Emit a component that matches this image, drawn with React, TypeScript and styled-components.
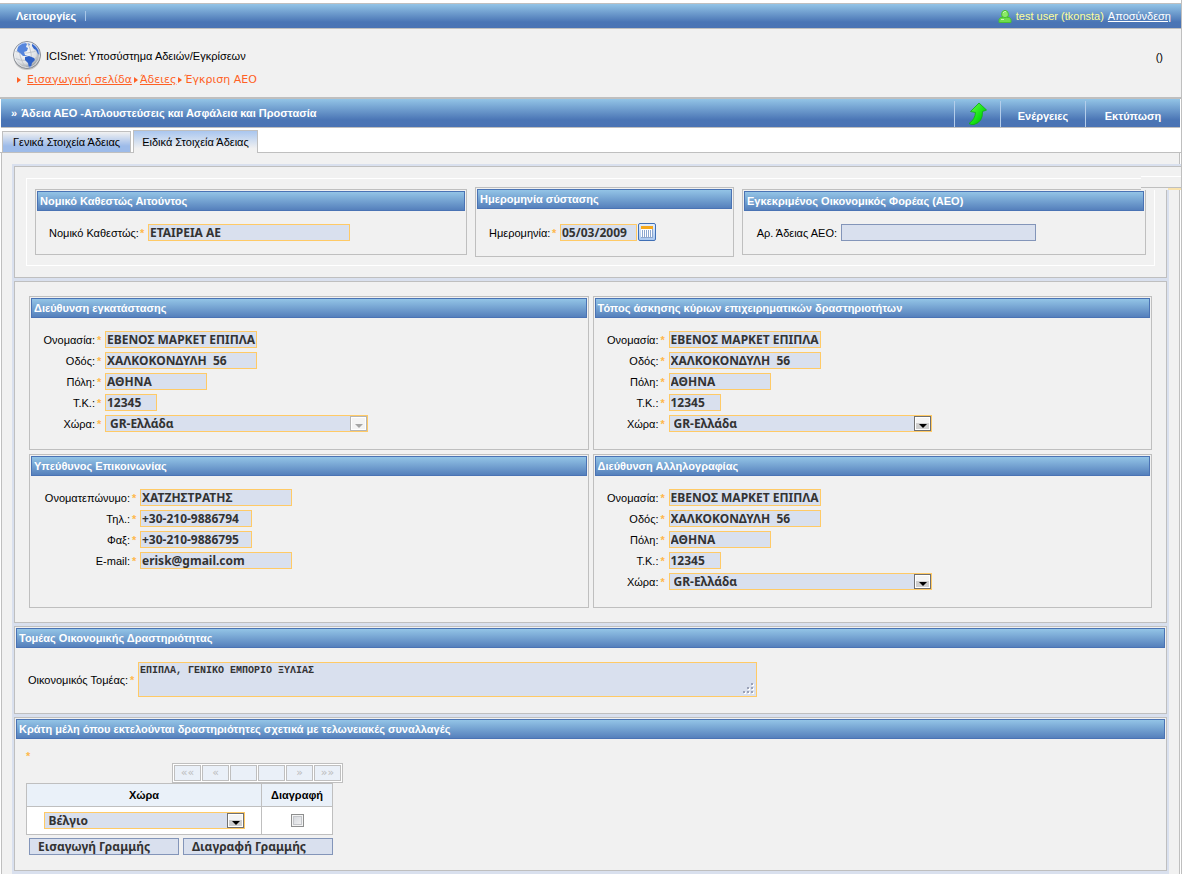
import React, { useId } from 'react';
import styled, { createGlobalStyle, css } from 'styled-components';

const uiFont = '"Liberation Sans", Arial, sans-serif';
const fieldFont = '"Noto Sans", "Liberation Sans", sans-serif';
const grey = '#bfbfbf';
const paper = '#f1f1f1';
const pale = '#d9e0ee';
const amber = '#ffca66';
const deepBlue = '#4a73b4';
const barGradient = 'linear-gradient(#93c4e6, #4a75b5 75%, #4a73b4)';

const GlobalStyle = createGlobalStyle`
  *, *::before, *::after { box-sizing: border-box; }
  body {
    margin: 0;
    background: #fff;
    color: #000;
    font: 11px/14px ${uiFont};
  }
  input, select, textarea, button { margin: 0; border-radius: 0; }
`;

const Page = styled.div`
  display: flex;
  flex-direction: column;
  min-height: 100vh;
  margin-right: 1px;
  padding-top: 3px;
  border-right: 1px solid ${grey};
`;

const TopBar = styled.nav`
  display: flex;
  align-items: center;
  justify-content: space-between;
  height: 26px;
  padding: 0 10px 0 16px;
  border: solid ${grey};
  border-width: 1px 0;
  background: ${barGradient};
  color: #fff;
`;

const MenuButton = styled.button`
  padding: 0 9px 0 0;
  border: 0;
  border-right: 1px solid #a9c6e6;
  background: none;
  color: #fff;
  font: bold 11px/10px ${uiFont};
`;

const UserInfo = styled.div`
  display: flex;
  align-items: center;
  gap: 4px;
  color: #ffff99;
`;

const LogoutLink = styled.a`
  color: #fff;
  text-decoration: underline;
`;

const Header = styled.header`
  display: flex;
  justify-content: space-between;
  align-items: flex-start;
  height: 70px;
  padding: 10px 18px 0 12px;
  border-bottom: 2px solid ${grey};
  background: ${paper};
`;

const AppName = styled.div`
  display: flex;
  align-items: center;
  gap: 4px;
  height: 34px;
`;

const OfficeCode = styled.span`
  padding-top: 11px;
`;

const Breadcrumb = styled.nav`
  display: flex;
  align-items: center;
  gap: 2px;
  color: #ff6124;
  font: 11px/14px "DejaVu Sans", Verdana, sans-serif;
  a { color: inherit; }
`;

const CrumbMark = styled.i<{ $first?: boolean }>`
  border: solid transparent;
  border-width: 3px 0 3px 4px;
  border-left-color: #ff6124;
  margin: ${p => (p.$first ? '0 4px 0 5px' : '0')};
`;

const TitleBar = styled.div`
  display: flex;
  justify-content: space-between;
  height: 29px;
  margin: 0 1px 0 1px;
  border-bottom: 1px solid ${grey};
  background: ${barGradient};
  color: #fff;
`;

const PageTitle = styled.h1`
  display: flex;
  align-items: center;
  gap: 4px;
  margin: 0;
  padding-left: 10px;
  font: bold 11px/28px ${uiFont};
`;

const Actions = styled.div`
  display: flex;
  padding-top: 2px;
`;

const ActionButton = styled.button<{ $width: number }>`
  display: flex;
  align-items: center;
  justify-content: center;
  width: ${p => p.$width}px;
  padding: 4px 0 0;
  border: 0;
  border-left: 1px solid #b4cdea;
  background: none;
  color: #fff;
  font: bold 11px/14px ${uiFont};
`;

const IconButton = styled(ActionButton)`
  padding: 0;
`;

const Tabs = styled.div`
  display: flex;
  align-items: flex-end;
  gap: 2px;
  height: 25px;
  padding-left: 2px;
  border-bottom: 1px solid ${grey};
`;

const Tab = styled.button<{ $active?: boolean }>`
  width: ${p => (p.$active ? 125 : 129)}px;
  height: ${p => (p.$active ? 23 : 21)}px;
  margin-bottom: ${p => (p.$active ? -1 : 0)}px;
  padding: 0;
  border: 1px solid ${grey};
  border-bottom: 0;
  background: ${p => (p.$active
    ? `linear-gradient(#a9c6ef, ${paper} 80%)`
    : `linear-gradient(${paper}, #9dbbe9 70%)`)};
  font: 11px/14px ${uiFont};
  color: #000;
  white-space: nowrap;
`;

const Content = styled.main`
  position: relative;
  display: flex;
  flex: 1;
  flex-direction: column;
  margin: 0 1px;
  padding: 11px 10px 0;
  border: solid ${grey};
  border-width: 0 1px;
  background: ${paper};
`;

/* Folded corner that lies over the top right of the form frame */
const CornerFlap = styled.div`
  position: absolute;
  top: 11px;
  right: -2px;
  width: 40px;
  height: 26px;
  background:
    linear-gradient(#f9e3ae, #f9e3ae) right bottom / 13px 2px no-repeat,
    linear-gradient(
      ${pale} 2px, ${grey} 2px 3px, ${paper} 3px 12px, #fff 12px 13px,
      ${paper} 13px 23px, ${grey} 23px 24px, ${paper} 24px
    );
`;

const Frame = styled.form`
  display: flex;
  flex: 1;
  flex-direction: column;
  gap: 3px;
  padding: 2px 2px 0;
  background: ${pale};
`;

const Section = styled.section<{ $pad?: string }>`
  padding: ${p => p.$pad || '1px'};
  border: 1px solid ${grey};
  background: ${paper};
`;

const NextSection = styled(Section)`
  flex: 1;
  padding: 0;
  border-bottom: 0;
`;

const Outline = styled.div`
  display: grid;
  grid-template-columns: 432fr 259fr 404fr;
  gap: 8px;
  align-items: center;
  height: 88px;
  padding: 0 8px;
  border: 1px solid #fff;
`;

const PanelGrid = styled.div`
  display: grid;
  grid-template-columns: 1fr 1fr;
  gap: 4px;
`;

const PanelBox = styled.section`
  padding: 1px;
  border: 1px solid ${grey};
`;

const PanelTitle = styled.h2`
  height: 20px;
  margin: 0;
  padding: 0 2px;
  border: 1px solid ${deepBlue};
  background: linear-gradient(#93c4e6, #5580bc);
  color: #fff;
  font: bold 11px/18px ${uiFont};
  white-space: nowrap;
  overflow: hidden;
`;

const Fields = styled.div<{ $label: number; $pad?: string }>`
  display: grid;
  grid-template-columns: ${p => p.$label}px 1fr;
  row-gap: 4px;
  padding: ${p => p.$pad || '13px 12px 16px'};
`;

const Label = styled.label`
  align-self: center;
  text-align: right;
  white-space: nowrap;
`;

const Slot = styled.div`
  display: flex;
  align-items: center;
`;

const Star = styled.span`
  width: 10px;
  padding-left: 2px;
  color: #ffb84d;
  font: bold 11px/14px ${uiFont};
`;

const Spacer = styled.span`
  width: 4px;
`;

const fieldLook = css<{ $plain?: boolean }>`
  border: 1px solid ${p => (p.$plain ? '#8395b9' : amber)};
  background: ${pale};
  color: #333;
  font: bold 12px/15px ${fieldFont};
  outline: 0;
`;

const TextInput = styled.input<{ $width: number; $plain?: boolean }>`
  ${fieldLook}
  width: ${p => p.$width}px;
  height: 17px;
  padding: 0 0 0 1px;
`;

const SelectWrap = styled.span<{ $width: number }>`
  position: relative;
  display: inline-block;
  width: ${p => p.$width}px;
  height: 17px;
`;

const SelectBox = styled.select`
  ${fieldLook}
  display: block;
  width: 100%;
  height: 17px;
  padding: 0 20px 0 4px;
  appearance: none;
  opacity: 1;
`;

const SelectArrow = styled.span<{ $off?: boolean }>`
  position: absolute;
  top: 1px;
  right: 1px;
  width: 17px;
  height: 15px;
  border: 1px solid ${p => (p.$off ? '#b5b5b5' : '#707070')};
  background: ${p => (p.$off ? '#f4f4f4' : 'linear-gradient(#f4f4f4 45%, #cfcfcf 50%)')};
  box-shadow: inset 0 0 0 1px #fff;
  pointer-events: none;
  &::after {
    content: '';
    position: absolute;
    left: 4px;
    top: 7px;
    border: solid transparent;
    border-width: 4px 4px 0;
    border-top-color: ${p => (p.$off ? '#a5a5a5' : '#000')};
  }
`;

const CalendarButton = styled.button`
  display: flex;
  align-items: center;
  justify-content: center;
  width: 18px;
  height: 18px;
  margin: -1px 0 0 1px;
  padding: 0;
  border: 1px solid #3f6fb5;
  border-radius: 2px;
  background: linear-gradient(#e4eefb, #a9c8f0);
`;

const AreaWrap = styled.span`
  position: relative;
  display: block;
  width: 619px;
  max-width: 100%;
  svg { position: absolute; right: 3px; bottom: 3px; }
`;

const TextArea = styled.textarea`
  display: block;
  width: 100%;
  height: 35px;
  padding: 1px;
  border: 1px solid ${amber};
  outline: 0;
  background: ${pale};
  color: #333;
  font: bold 10px/14px "Liberation Mono", "Courier New", monospace;
  resize: none;
`;

const Members = styled.div`
  padding: 10px 10px 14px;
`;

const MembersStar = styled.div`
  height: 14px;
  color: #ffb84d;
  font: bold 11px/14px ${uiFont};
`;

const Pager = styled.div`
  display: flex;
  gap: 1px;
  width: 171px;
  margin-left: 146px;
  padding: 1px;
  border: 1px solid ${grey};
  background: #fff;
`;

const PagerButton = styled.button`
  width: 27px;
  height: 16px;
  padding: 0;
  border: 1px solid ${grey};
  background: #eaf0f8;
  color: #bcbcbc;
  font: 11px/14px "DejaVu Sans", Verdana, sans-serif;
`;

const Table = styled.table`
  width: 307px;
  border-collapse: collapse;
  background: #fff;
  th, td {
    padding: 0;
    border: 1px solid ${grey};
    text-align: center;
    vertical-align: middle;
  }
  th {
    height: 23px;
    background: #eaf1f9;
    font: bold 11px/14px ${uiFont};
  }
  td { height: 28px; }
  th:last-child { width: 71px; }
`;

const CellInner = styled.div`
  display: flex;
  align-items: center;
  justify-content: center;
`;

const Check = styled.input`
  appearance: none;
  width: 13px;
  height: 13px;
  border: 1px solid #8e8f8f;
  background: linear-gradient(135deg, #cfd2d8, #f6f6f6);
  box-shadow: inset 0 0 0 1px #f4f4f4, inset 0 0 0 2px #c4c6ca;
`;

const RowActions = styled.div`
  display: flex;
  gap: 4px;
  padding: 3px 0 0 3px;
`;

const RowButton = styled.button`
  width: 150px;
  height: 17px;
  padding: 0 8px;
  border: 1px solid #8395b9;
  background: ${pale};
  color: #333;
  font: bold 12px/15px ${fieldFont};
  text-align: left;
`;

const GlobeIcon = () => (
  <svg width="30" height="32" viewBox="0 0 30 32" aria-hidden="true">
    <defs>
      <radialGradient id="globe" cx="0.4" cy="0.35" r="0.65">
        <stop offset="0" stopColor="#fff" />
        <stop offset="0.7" stopColor="#dcdfe3" />
        <stop offset="1" stopColor="#8d9298" />
      </radialGradient>
      <clipPath id="ball"><circle cx="15" cy="15" r="13" /></clipPath>
    </defs>
    <ellipse cx="15" cy="18" rx="13" ry="12" fill="#9a9a9a" opacity="0.5" />
    <circle cx="15" cy="15" r="13.5" fill="url(#globe)" stroke="#8a8f97" />
    <g clipPath="url(#ball)">
      <g fill="none" stroke="#b9bec5" strokeWidth="0.8">
        <path d="M2 11Q15 16 28 9M2 18Q15 24 28 16M7 3Q6 17 14 28M15 2Q22 14 18 28M22 4Q29 15 23 26" />
      </g>
      <path d="M6 6L9 3L13 2L15 4L14 7L16 8L15 11L12 12L13 15L16 16L11 16L8 13L5 11Z" fill="#5585dd" />
      <path d="M13 17L17 16L22 18L23 20L20 23L19 27L17 28L16 23L13 20Z" fill="#2f62c8" />
      <path d="M20 3L24 6L27 10L28 15L26 14L24 10L22 9L20 6Z" fill="#3467cc" />
      <path d="M16 3L18 4L17 6Z" fill="#5585dd" />
    </g>
    <circle cx="15" cy="15" r="12.5" fill="none" stroke="#fff" strokeOpacity="0.6" />
  </svg>
);

const UserIcon = () => (
  <svg width="14" height="15" viewBox="0 0 14 15" aria-hidden="true">
    <path d="M1 13.5V10.500L2.500 8.500H11.500L13 10.500V13.500Z" fill="#6fdd4e" stroke="#49c032" />
    <path d="M4 7.500Q3 5 4.500 2.500Q7 0 9.500 2.500Q11 5 10 7.500Q7 10 4 7.500Z" fill="#8bea68" stroke="#49c032" />
    <path d="M5 4Q6 2 8 2.500M3 10.500H6" fill="none" stroke="#c9f8b5" />
  </svg>
);

const ArrowIcon = () => (
  <svg width="19" height="24" viewBox="0 0 19 24" aria-hidden="true">
    <defs>
      <linearGradient id="leaf" x1="0" y1="0" x2="1" y2="1">
        <stop offset="0" stopColor="#6dff4a" />
        <stop offset="0.6" stopColor="#12e012" />
        <stop offset="1" stopColor="#0aa80a" />
      </linearGradient>
    </defs>
    <path d="M1 21.500Q7 17.500 7.500 10.500L2.500 9.500L11 1L18.500 8L14.500 9.500Q15 20 6 22.500Q3 23 1 21.500Z" fill="url(#leaf)" stroke="#0bb00b" strokeWidth="0.8" />
  </svg>
);

const CalendarIcon = () => (
  <svg width="14" height="14" viewBox="0 0 14 14" aria-hidden="true">
    <rect x="1" y="1" width="12" height="12" fill="#fff" />
    <rect x="1" y="1" width="12" height="3" fill="#f5a81c" />
    <path d="M2.500 5V12M4.500 5V12M6.500 5V12M8.500 5V12M10.500 5V12M12.500 4V13M1 12.500H13" stroke="#8ba6cf" />
  </svg>
);

const GripIcon = () => (
  <svg width="11" height="11" viewBox="0 0 11 11" aria-hidden="true">
    <g fill="#fff">
      <path d="M9 1h2v2h-2zM5 5h2v2h-2zM9 5h2v2h-2zM1 9h2v2h-2zM5 9h2v2h-2zM9 9h2v2h-2z" />
    </g>
    <g fill="#9aa2b8">
      <path d="M8 0h2v2h-2zM4 4h2v2h-2zM8 4h2v2h-2zM0 8h2v2h-2zM4 8h2v2h-2zM8 8h2v2h-2z" />
    </g>
  </svg>
);

function Panel({ title, children }: { title: string; children: React.ReactNode }) {
  return (
    <PanelBox>
      <PanelTitle>{title}</PanelTitle>
      {children}
    </PanelBox>
  );
}

type TextFieldProps = {
  label: string;
  value: string;
  width: number;
  optional?: boolean;
  children?: React.ReactNode;
};

function TextField({ label, value, width, optional, children }: TextFieldProps) {
  const id = useId();
  return (
    <>
      <Label htmlFor={id}>{label}</Label>
      <Slot>
        {optional ? <Spacer /> : <Star>*</Star>}
        <TextInput id={id} type="text" defaultValue={value} $width={width} $plain={optional} />
        {children}
      </Slot>
    </>
  );
}

type CountrySelectProps = { id?: string; name?: string; value: string; width: number; disabled?: boolean };

function CountrySelect({ id, name, value, width, disabled }: CountrySelectProps) {
  return (
    <SelectWrap $width={width}>
      <SelectBox id={id} aria-label={name} defaultValue={value} disabled={disabled}>
        <option>{value}</option>
      </SelectBox>
      <SelectArrow $off={disabled} />
    </SelectWrap>
  );
}

function AddressPanel({ title, locked }: { title: string; locked?: boolean }) {
  const id = useId();
  return (
    <Panel title={title}>
      <Fields $label={52}>
        <TextField label="Ονομασία:" value="ΕΒΕΝΟΣ ΜΑΡΚΕΤ ΕΠΙΠΛΑ" width={152} />
        <TextField label="Οδός:" value="ΧΑΛΚΟΚΟΝΔΥΛΗ  56" width={152} />
        <TextField label="Πόλη:" value="ΑΘΗΝΑ" width={102} />
        <TextField label="Τ.Κ.:" value="12345" width={52} />
        <Label htmlFor={id}>Χώρα:</Label>
        <Slot>
          <Star>*</Star>
          <CountrySelect id={id} value="GR-Ελλάδα" width={263} disabled={locked} />
        </Slot>
      </Fields>
    </Panel>
  );
}

export default function App() {
  return (
    <>
      <GlobalStyle />
      <Page>
        <TopBar>
          <MenuButton type="button">Λειτουργίες</MenuButton>
          <UserInfo>
            <UserIcon />
            <span>test user (tkonsta)</span>
            <LogoutLink href="#logout">Αποσύνδεση</LogoutLink>
          </UserInfo>
        </TopBar>

        <Header>
          <div>
            <AppName>
              <GlobeIcon />
              <span>ICISnet: Υποσύστημα Αδειών/Εγκρίσεων</span>
            </AppName>
            <Breadcrumb>
              <CrumbMark $first />
              <a href="#home">Εισαγωγική σελίδα</a>
              <CrumbMark />
              <a href="#licences">Άδειες</a>
              <CrumbMark />
              <span>Έγκριση ΑΕΟ</span>
            </Breadcrumb>
          </div>
          <OfficeCode>()</OfficeCode>
        </Header>

        <TitleBar>
          <PageTitle>
            <span>»</span>
            <span>Άδεια ΑΕΟ -Απλουστεύσεις και Ασφάλεια και Προστασία</span>
          </PageTitle>
          <Actions>
            <IconButton type="button" aria-label="Επιστροφή" $width={46}><ArrowIcon /></IconButton>
            <ActionButton type="button" $width={85}>Ενέργειες</ActionButton>
            <ActionButton type="button" $width={95}>Εκτύπωση</ActionButton>
          </Actions>
        </TitleBar>

        <Tabs role="tablist">
          <Tab type="button" role="tab" aria-selected={false}>Γενικά Στοιχεία Άδειας</Tab>
          <Tab type="button" role="tab" aria-selected $active>Ειδικά Στοιχεία Άδειας</Tab>
        </Tabs>

        <Content>
          <Frame>
            <Section $pad="11px">
              <Outline>
                <Panel title="Νομικό Καθεστώς Αιτούντος">
                  <Fields $label={89} $pad="13px 12px 12px">
                    <TextField label="Νομικό Καθεστώς:" value="ΕΤΑΙΡΕΙΑ ΑΕ" width={202} />
                  </Fields>
                </Panel>
                <Panel title="Ημερομηνία σύστασης">
                  <Fields $label={61} $pad="15px 12px 14px">
                    <TextField label="Ημερομηνία:" value="05/03/2009" width={77}>
                      <CalendarButton type="button" aria-label="Ημερολόγιο"><CalendarIcon /></CalendarButton>
                    </TextField>
                  </Fields>
                </Panel>
                <Panel title="Εγκεκριμένος Οικονομικός Φορέας (ΑΕΟ)">
                  <Fields $label={81} $pad="13px 12px 12px">
                    <TextField label="Αρ. Άδειας ΑΕΟ:" value="" width={195} optional />
                  </Fields>
                </Panel>
              </Outline>
            </Section>

            <Section $pad="14px">
              <PanelGrid>
                <AddressPanel title="Διεύθυνση εγκατάστασης" locked />
                <AddressPanel title="Τόπος άσκησης κύριων επιχειρηματικών δραστηριοτήτων" />
                <Panel title="Υπεύθυνος Επικοινωνίας">
                  <Fields $label={87}>
                    <TextField label="Ονοματεπώνυμο:" value="ΧΑΤΖΗΣΤΡΑΤΗΣ" width={152} />
                    <TextField label="Τηλ.:" value="+30-210-9886794" width={112} />
                    <TextField label="Φαξ:" value="+30-210-9886795" width={112} />
                    <TextField label="E-mail:" value="erisk@gmail.com" width={152} />
                  </Fields>
                </Panel>
                <AddressPanel title="Διεύθυνση Αλληλογραφίας" />
              </PanelGrid>
            </Section>

            <Section>
              <PanelTitle>Τομέας Οικονομικής Δραστηριότητας</PanelTitle>
              <Fields $label={100} $pad="14px 12px 15px">
                <Label htmlFor="sector">Οικονομικός Τομέας:</Label>
                <Slot>
                  <Star>*</Star>
                  <AreaWrap>
                    <TextArea id="sector" defaultValue="ΕΠΙΠΛΑ, ΓΕΝΙΚΟ ΕΜΠΟΡΙΟ ΞΥΛΙΑΣ" />
                    <GripIcon />
                  </AreaWrap>
                </Slot>
              </Fields>
            </Section>

            <Section>
              <PanelTitle>Κράτη μέλη όπου εκτελούνται δραστηριότητες σχετικά με τελωνειακές συναλλαγές</PanelTitle>
              <Members>
                <MembersStar>*</MembersStar>
                <Pager>
                  <PagerButton type="button">««</PagerButton>
                  <PagerButton type="button">«</PagerButton>
                  <PagerButton type="button" aria-label="Προηγούμενη" />
                  <PagerButton type="button" aria-label="Επόμενη" />
                  <PagerButton type="button">»</PagerButton>
                  <PagerButton type="button">»»</PagerButton>
                </Pager>
                <Table>
                  <thead>
                    <tr>
                      <th scope="col">Χώρα</th>
                      <th scope="col">Διαγραφή</th>
                    </tr>
                  </thead>
                  <tbody>
                    <tr>
                      <td>
                        <CellInner><CountrySelect name="Χώρα" value="Βέλγιο" width={201} /></CellInner>
                      </td>
                      <td>
                        <CellInner><Check type="checkbox" aria-label="Διαγραφή" /></CellInner>
                      </td>
                    </tr>
                  </tbody>
                </Table>
                <RowActions>
                  <RowButton type="button">Εισαγωγή Γραμμής</RowButton>
                  <RowButton type="button">Διαγραφή Γραμμής</RowButton>
                </RowActions>
              </Members>
            </Section>

            <NextSection />
          </Frame>
          <CornerFlap />
        </Content>
      </Page>
    </>
  );
}
